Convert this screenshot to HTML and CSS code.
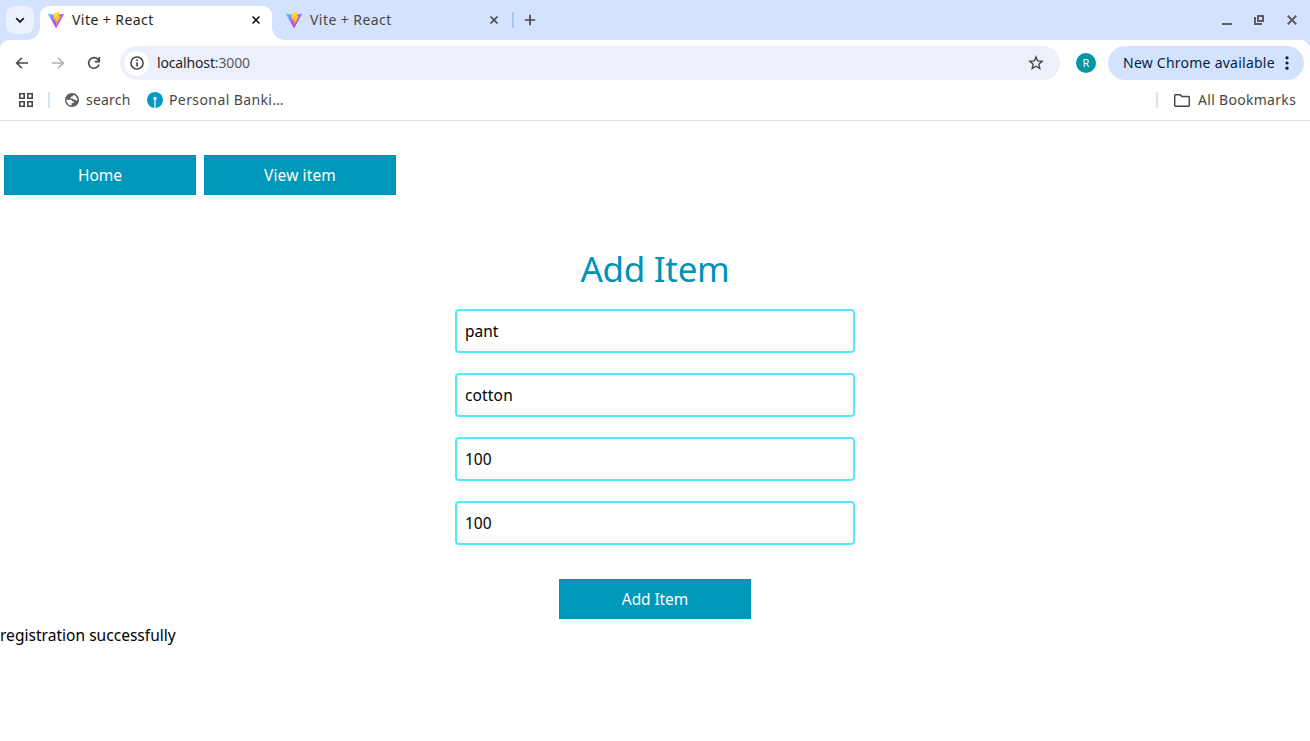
FILE: index.html
```
<!DOCTYPE html>
<html lang="en">
<head>
<meta charset="utf-8">
<title>Vite + React</title>
<link rel="stylesheet" href="styles.css">
</head>
<body>
<svg width="0" height="0" class="defs">
  <defs>
    <linearGradient id="violet" x1="0" y1="0" x2="0.6" y2="1"><stop offset="0" stop-color="#41d1ff"/><stop offset="0.5" stop-color="#a162ff"/><stop offset="1" stop-color="#bd34fe"/></linearGradient>
    <linearGradient id="bolt" x1="0.3" y1="0" x2="0.6" y2="1"><stop offset="0" stop-color="#ffea83"/><stop offset="0.1" stop-color="#ffdd35"/><stop offset="1" stop-color="#ffa800"/></linearGradient>
    <symbol id="vite" viewBox="0 0 256 257">
      <path fill="url(#violet)" d="M255.153 37.938 134.897 252.976c-2.483 4.44-8.862 4.466-11.382.048L.875 37.958c-2.746-4.814 1.371-10.646 6.827-9.67l120.385 21.517a6.537 6.537 0 0 0 2.322-.004l117.867-21.483c5.438-.991 9.574 4.796 6.877 9.62Z"/>
      <path fill="url(#bolt)" d="M185.432.063 96.44 17.501a3.268 3.268 0 0 0-2.634 3.014l-5.474 92.456a3.268 3.268 0 0 0 3.997 3.378l24.777-5.718c2.318-.535 4.413 1.507 3.936 3.838l-7.361 36.047c-.495 2.426 1.782 4.5 4.151 3.78l15.304-4.649c2.372-.72 4.652 1.36 4.15 3.788l-11.698 56.621c-.732 3.542 3.979 5.473 5.943 2.437l1.313-2.028 72.516-144.72c1.215-2.423-.88-5.186-3.54-4.672l-25.505 4.922c-2.396.462-4.435-1.77-3.759-4.114l16.646-57.705c.677-2.35-1.37-4.583-3.769-4.113Z"/>
    </symbol>
    <symbol id="cross" viewBox="0 0 10 10"><path d="M1.500 1.500 8.500 8.500M8.500 1.500 1.500 8.500" fill="none" stroke="currentColor" stroke-width="1.600"/></symbol>
  </defs>
</svg>
<div class="browser">
  <header class="tabstrip">
    <div class="tab-search"><svg width="10" height="7" viewBox="0 0 10 7"><path d="M1.2 1.2 5 5l3.800-3.800" fill="none" stroke="#1f1f1f" stroke-width="1.8"/></svg></div>
    <div class="tab active">
      <svg class="vite" width="16" height="16"><use href="#vite"/></svg>
      <span class="tab-title">Vite + React</span>
      <svg class="close" width="10" height="10"><use href="#cross"/></svg>
    </div>
    <div class="tab">
      <svg class="vite" width="16" height="16"><use href="#vite"/></svg>
      <span class="tab-title">Vite + React</span>
      <svg class="close" width="10" height="10"><use href="#cross"/></svg>
    </div>
    <span class="tab-divider"></span>
    <svg class="new-tab" width="12" height="12" viewBox="0 0 12 12"><path d="M6 .8v10.400M.8 6h10.400" stroke="#474747" stroke-width="1.7"/></svg>
    <div class="window-controls">
      <svg width="10" height="12" viewBox="0 0 10 12"><path d="M0 9h10v2H0z" fill="#5b5e62"/></svg>
      <svg width="10" height="10" viewBox="0 0 10 10"><path d="M4 1h5v5H4zM1 2v7h7" fill="none" stroke="#5b5e62" stroke-width="2"/></svg>
      <svg width="10" height="10" viewBox="0 0 10 10"><path d="m.8.8 8.400 8.400M9.200.8.800 9.200" stroke="#5b5e62" stroke-width="2"/></svg>
    </div>
  </header>
  <div class="toolbar-wrap">
  <div class="toolbar">
    <svg class="back" width="14" height="12" viewBox="0 0 14 12"><path d="M13 6H1.700M7 .8 1.700 6 7 11.200" fill="none" stroke="#474747" stroke-width="1.600"/></svg>
    <svg class="forward" width="14" height="12" viewBox="0 0 14 12"><path d="M.8 6h11.400M7 .8 12.300 6 7 11.200" fill="none" stroke="#b0b0b0" stroke-width="1.600"/></svg>
    <svg class="reload" width="14" height="14" viewBox="0 0 14 14"><path d="M12 8.600A5.300 5.300 0 1 1 10.900 3.400L12.300 5M12.300 1v4.600H7.800" fill="none" stroke="#474747" stroke-width="1.600"/></svg>
    <div class="omnibox">
      <span class="info"><svg width="14" height="14" viewBox="0 0 14 14"><circle cx="7" cy="7" r="6.100" fill="none" stroke="#333" stroke-width="1.400"/><path d="M6.300 6.200h1.500v4.300H6.300zM6.300 3.500h1.500V5H6.300z" fill="#333"/></svg></span>
      <span class="url">localhost<i>:3000</i></span>
      <svg class="star" width="16" height="16" viewBox="0 0 16 16"><path d="m8 1.900 1.700 4 4.500.4-3.400 2.900 1 4.300L8 11.200l-3.800 2.300 1-4.300-3.400-2.900 4.500-.4z" fill="none" stroke="#474747" stroke-width="1.400"/></svg>
    </div>
    <span class="avatar">R</span>
    <div class="update"><span class="update-text">New Chrome available</span><svg width="4" height="14" viewBox="0 0 4 14"><g fill="#041e49"><circle cx="2" cy="1.800" r="1.600"/><circle cx="2" cy="7" r="1.600"/><circle cx="2" cy="12.200" r="1.600"/></g></svg></div>
  </div>
  <div class="bookmarks">
    <svg class="apps" width="14" height="14" viewBox="0 0 14 14"><path d="M.8.8h4.400v4.400H.8zM8.800.8h4.400v4.400H8.800zM.8 8.800h4.400v4.400H.8zM8.800 8.800h4.400v4.400H8.800z" fill="none" stroke="#474747" stroke-width="1.600"/></svg>
    <span class="divider"></span>
    <svg class="globe" width="14" height="14" viewBox="0 0 14 14"><circle cx="7" cy="7" r="7" fill="#5b5e62"/><path d="M1.500 6.700h3.800c1.400 0 2 .7 2 1.700h1.500v1.700H6.600v2.200c-2.800 0-5.100-2.500-5.100-5.600zM8.100 1.700v.9c0 .7-.6 1.200-1.300 1.200H5.700v1.600h2.200l.8 1.400h2l.5 1 1.200-.5c0-2.700-1.800-5-4.300-5.600z" fill="#fff"/></svg>
    <span class="bm-search">search</span>
    <svg class="bank" width="16" height="16" viewBox="0 0 16 16"><circle cx="8" cy="8" r="8" fill="#0098c9"/><circle cx="8" cy="6.500" r="1.700" fill="#fff"/><path d="M7.300 7h1.400v8.900H7.300z" fill="#d8f1fa"/></svg>
    <span class="bm-bank">Personal Banki…</span>
    <span class="divider right"></span>
    <svg class="folder" width="16" height="13" viewBox="0 0 16 13"><path d="M1.700.8h4.500l1.600 1.600h6.500c.6 0 1 .4 1 1v7.800c0 .6-.4 1-1 1H1.700c-.6 0-1-.4-1-1V1.800c0-.6.4-1 1-1z" fill="none" stroke="#474747" stroke-width="1.500"/></svg>
    <span class="bm-all">All Bookmarks</span>
  </div>
  </div>
</div>
<main>
  <nav class="nav"><a class="btn"><span>Home</span></a><a class="btn"><span class="view">View item</span></a></nav>
  <form class="form">
    <h1>Add Item</h1>
    <div class="field">pant</div>
    <div class="field cotton">cotton</div>
    <div class="field">100</div>
    <div class="field">100</div>
    <a class="btn submit"><span class="add">Add Item</span></a>
  </form>
  <p class="status">registration successfully</p>
</main>
</body>
</html>
```
FILE: styles.css
```
* { box-sizing: border-box; }
body { margin: 0; height: 741px; overflow: hidden; background: #fff; color: #000; font: 15.5px/24px "Noto Sans", sans-serif; }
svg { display: block; flex: none; }
span, p, h1 { white-space: nowrap; }
.defs { position: absolute; }

.browser { background: #d3e3fd; color: #474747; font-size: 14px; line-height: 20px; }
.tabstrip { height: 40px; display: flex; align-items: center; padding-left: 6px; }
.tab-search { width: 28px; height: 28px; margin-right: 6px; border-radius: 9px; background: #ebf1fe; display: grid; place-items: center; flex: none; }
.tab { position: relative; width: 232px; height: 34px; margin-top: 6px; padding: 0 11px 6px 8px; display: flex; align-items: center; flex: none; }
.tab + .tab { margin-left: 6px; }
.tab.active { background: #fff; border-radius: 9px 9px 0 0; color: #1f1f1f; }
.tab.active::before, .tab.active::after { content: ""; position: absolute; bottom: 0; width: 12px; height: 12px; }
.tab.active::before { left: -12px; background: radial-gradient(circle at 0 0, transparent 11.5px, #fff 12px); }
.tab.active::after { right: -12px; background: radial-gradient(circle at 100% 0, transparent 11.5px, #fff 12px); }
.tab-title { width: 84px; margin-left: 8px; letter-spacing: 0.44px; }
.close { margin-left: auto; }
.tab-divider { width: 2px; height: 16px; margin-left: 2px; background: #a8c7fa; border-radius: 1px; }
.new-tab { margin-left: 10px; }
.window-controls { margin-left: auto; padding-right: 13px; display: grid; grid-template-columns: 32px 33px 10px; align-items: center; }

.toolbar-wrap { background: #fff; border-radius: 9px 9px 0 0; border-bottom: 1px solid #dfe1e4; height: 81px; }
.toolbar { height: 46px; display: flex; align-items: center; padding: 0 6px 0 15px; }
.forward { margin-left: 22px; }
.reload { margin-left: 22px; }
.omnibox { width: 940px; height: 34px; margin-left: 19px; padding: 0 16px 0 4px; border-radius: 17px; background: #ecf0fa; display: flex; align-items: center; }
.info { width: 25px; height: 25px; border-radius: 50%; background: #fff; display: grid; place-items: center; }
.url { margin-left: 8px; color: #1f1f1f; letter-spacing: -0.15px; }
.url i { font-style: normal; color: #5b5e62; }
.star { margin-left: auto; }
.avatar { width: 20px; height: 20px; margin-left: 16px; border-radius: 50%; background: #0097a7; color: #fff; font-size: 11px; text-align: center; }
.update { width: 196px; height: 34px; margin-left: auto; padding: 0 15px; border-radius: 17px; background: #d3e3fd; color: #041e49; display: flex; align-items: center; justify-content: space-between; }
.update-text { letter-spacing: 0.24px; }

.bookmarks { height: 28px; display: flex; align-items: center; padding: 0 14px 0 19px; }
.divider { width: 2px; height: 16px; margin-left: 15px; background: #d3e3fd; border-radius: 1px; }
.globe { margin-left: 15px; }
.bm-search { width: 45px; margin-left: 7px; letter-spacing: 0.2px; }
.bank { margin-left: 16px; }
.bm-bank { margin-left: 6px; letter-spacing: 0.4px; }
.divider.right { margin-left: auto; }
.folder { margin-left: 16px; }
.bm-all { width: 98px; margin-left: 8px; letter-spacing: 0.3px; }

.nav { padding: 34px 4px 0; display: flex; gap: 8px; }
.btn { width: 192px; height: 40px; background: #0098ba; color: #fff; display: flex; align-items: center; justify-content: center; }
.view { letter-spacing: 0.12px; }
.form { display: flex; flex-direction: column; align-items: center; }
h1 { margin: 54px 0 20px; color: #0092b8; font-size: 35px; font-weight: 400; line-height: 40px; letter-spacing: -0.3px; }
.field { width: 400px; height: 44px; margin-bottom: 20px; padding: 8px; border: 2px solid #53eafd; border-radius: 4px; }
.cotton { letter-spacing: 0.15px; }
.submit { margin-top: 14px; }
.add { letter-spacing: -0.1px; }
.status { margin: 4px 0 0; letter-spacing: 0.03px; }
```
